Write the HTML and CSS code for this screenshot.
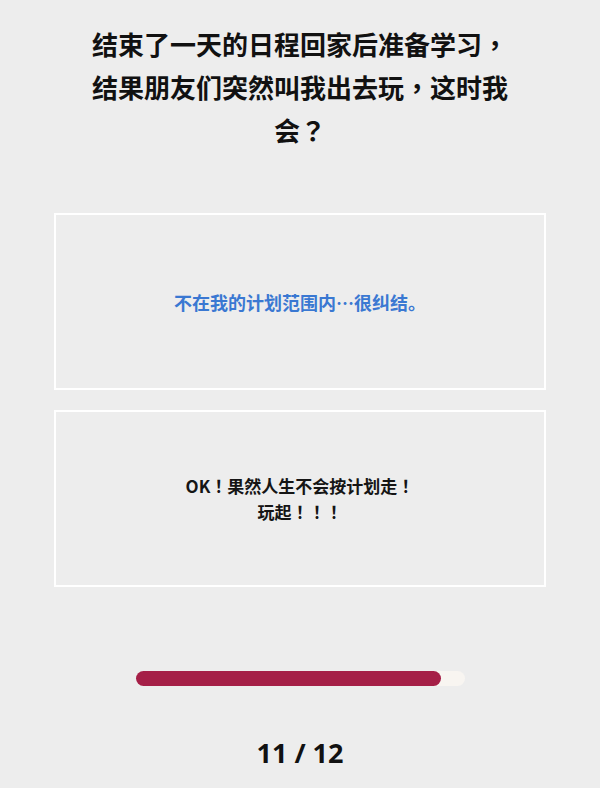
FILE: index.html
```html
<!DOCTYPE html>
<html lang="zh-TW">
<head>
    <meta charset="UTF-8">
    <meta name="viewport" content="width=device-width, initial-scale=1.0">
    <title>测试</title>
    <link rel="stylesheet" href="styles.css">
</head>
<body>

<div class="quiz">
    <h2 class="question">结束了一天的日程回家后准备学习，结果朋友们突然叫我出去玩，这时我会？</h2>

    <div class="options">
        <div class="option selected">不在我的计划范围内…很纠结<span lang="zh-CN">。</span></div>
        <div class="option">OK！果然人生不会按计划走！<br>玩起！！！</div>
    </div>

    <div class="progress">
        <div class="progress-fill" style="width: 93%"></div>
    </div>
    <div class="counter">11 / 12</div>
</div>

</body>
</html>
```

FILE: styles.css
```css
body {
    font-family: "Noto Sans", "Noto Sans CJK TC", sans-serif;
    margin: 0;
    background-color: #ededed;
}
.quiz {
    width: 600px;
    height: 788px;
    display: flex;
    flex-direction: column;
    align-items: center;
}
.question {
    width: 430px;
    margin: 22px 0 0;
    font-family: "Noto Sans CJK TC", sans-serif;
    font-size: 26px;
    line-height: 43px;
    font-weight: bold;
    text-align: center;
    color: #111;
}
.options {
    width: 492px;
    margin-top: 62px;
    display: flex;
    flex-direction: column;
    gap: 20px;
}
.option {
    height: 173px;
    border: 2px solid #fff;
    display: flex;
    align-items: center;
    justify-content: center;
    text-align: center;
    font-family: "Noto Sans CJK TC", sans-serif;
    font-size: 17px;
    line-height: 26px;
    font-weight: bold;
    color: #151515;
}
.option.selected {
    color: #3a78d2;
    font-size: 18px;
}
.option span {
    font-family: "Noto Sans CJK SC", sans-serif;
}
.progress {
    width: 329px;
    height: 15px;
    margin-top: 84px;
    border-radius: 8px;
    background-color: #f8f5f1;
}
.progress-fill {
    height: 100%;
    border-radius: 8px;
    background-color: #a51f47;
}
.counter {
    margin-top: 48px;
    font-size: 27px;
    font-weight: bold;
    color: #111;
}
```
